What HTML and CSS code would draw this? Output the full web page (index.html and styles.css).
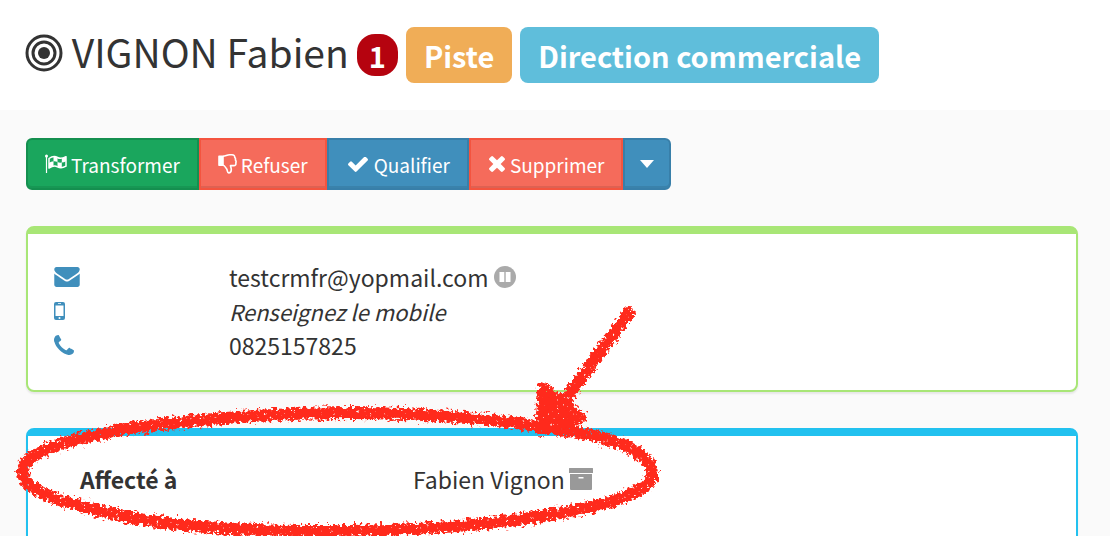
FILE: index.html
```
<!DOCTYPE html>
<html lang="fr">
<head>
    <meta charset="UTF-8">
    <meta name="viewport" content="width=device-width, initial-scale=1.0">
    <title>VIGNON Fabien</title>
    <link rel="stylesheet" href="styles.css">
</head>
<body>
    <header class="page-header">
        <h1>
            <svg class="icon-target" viewBox="0 0 38 38" aria-hidden="true">
                <circle cx="19" cy="19" r="17" fill="none" stroke="currentColor" stroke-width="3"/>
                <circle cx="19" cy="19" r="11" fill="none" stroke="currentColor" stroke-width="3"/>
                <circle cx="19" cy="19" r="6" fill="currentColor"/>
            </svg>
            VIGNON Fabien
        </h1>
        <span class="badge">1</span>
        <span class="label label-warning">Piste</span>
        <span class="label label-info">Direction commerciale</span>
    </header>

    <main class="content">
        <div class="btn-group">
            <button type="button" class="btn btn-success">
                <svg class="icon-flag" viewBox="0 0 22 20" fill="none" stroke="currentColor" aria-hidden="true">
                    <path d="M1.500 2v17" stroke-width="1.200"/>
                    <circle cx="1.500" cy="2" r="1.500" fill="currentColor" stroke="none"/>
                    <path d="M4 4.500C7.500 2 10 2 12.500 3.500s5 1 8.500-.8v9.500c-3.500 2-6 2-8.500.6s-5-1-8.500 1.200z" stroke-width="1.500" stroke-linejoin="round"/>
                    <path d="M8.500 2.700c1.500-.1 2.800.2 4 .8v4.500c-1.200-.6-2.500-.9-4-.8zM12.500 8c1.300.7 2.700.9 4.300.6v4.600c-1.600.3-3 .1-4.300-.4zM4 9c1.500-1 3-1.700 4.500-1.800v4.900C7 12.200 5.500 13 4 14zM16.800 4.100c1.400-.2 2.800-.7 4.200-1.400v4.500c-1.400.7-2.800 1.200-4.200 1.400z" fill="currentColor" stroke="none"/>
                </svg>
                Transformer
            </button>
            <button type="button" class="btn btn-danger">
                <svg class="icon-thumb" viewBox="0 0 19 20" fill="none" stroke="currentColor" stroke-width="1.600" stroke-linejoin="round" aria-hidden="true">
                    <path d="M1 2.300h4v9H1z" fill="currentColor"/>
                    <path d="M5 2.300c2.500 0 4-1.500 6.500-1.500h2.500c2 0 2.800 1 2.700 2.500.9.800 1 1.700.7 2.700.8 1 .9 2 .4 2.900.4 1.700-.5 2.700-2 2.700h-3.300c.2 1.500.9 2.700.8 4.300-.1 2-1.200 3-2.600 3-1.500-.1-1.200-2.600-2-3.900C7.500 13.300 6.500 11.300 5 11.300"/>
                </svg>
                Refuser
            </button>
            <button type="button" class="btn btn-primary">
                <svg class="icon-check" viewBox="-34 370 1860 1152" fill="currentColor" aria-hidden="true">
                    <path d="M1671 566q0 40-28 68l-724 724-136 136q-28 28-68 28t-68-28l-136-136-362-362q-28-28-28-68t28-68l136-136q28-28 68-28t68 28l294 295 656-657q28-28 68-28t68 28l136 136q28 28 28 68z"/>
                </svg>
                Qualifier
            </button>
            <button type="button" class="btn btn-danger">
                <svg class="icon-times" viewBox="228 366 1337 1188" fill="currentColor" aria-hidden="true">
                    <path d="M1490 1322q0 40-28 68l-136 136q-28 28-68 28t-68-28l-294-294-294 294q-28 28-68 28t-68-28l-136-136q-28-28-28-68t28-68l294-294-294-294q-28-28-28-68t28-68l136-136q28-28 68-28t68 28l294 294 294-294q28-28 68-28t68 28l136 136q28 28 28 68t-28 68l-294 294 294 294q28 28 28 68z"/>
                </svg>
                Supprimer
            </button>
            <button type="button" class="btn btn-primary btn-toggle" aria-label="Plus d'actions">
                <span class="caret"></span>
            </button>
        </div>

        <section class="box box-contact">
            <dl class="contact-list">
                <dt>
                    <svg class="icon-mail" viewBox="0 256 1792 1408" fill="currentColor" role="img" aria-label="Email">
                        <path d="M1792 710v794q0 66-47 113t-113 47h-1472q-66 0-113-47t-47-113v-794q44 49 101 87 362 246 497 345 57 42 92.500 65.500t94.500 48 110 24.500h2q51 0 110-24.500t94.500-48 92.500-65.500q170-123 498-345 57-39 100-87zm0-294q0 79-49 151t-122 123q-376 261-468 325-10 7-42.500 31t-54 38.500-52 32.500-57.500 27-50 9h-2q-23 0-50-9t-57.500-27-52-32.500-54-38.500-42.500-31q-91-64-262-182.500t-205-142.500q-62-42-117-115.500t-55-136.500q0-78 41.500-130t118.500-52h1472q65 0 112.500 47t47.500 113z"/>
                    </svg>
                </dt>
                <dd>
                    testcrmfr@yopmail.com
                    <svg class="icon-pause" viewBox="0 0 22 22" aria-hidden="true">
                        <circle cx="11" cy="11" r="11" fill="#aaa"/>
                        <path d="M5.500 6h4.800v10H5.500zM11.700 6h4.800v10h-4.800z" fill="#fff"/>
                    </svg>
                </dd>
                <dt>
                    <svg class="icon-mobile" viewBox="0 0 11 18" role="img" aria-label="Mobile">
                        <path fill="currentColor" fill-rule="evenodd" d="M2 0h7a2 2 0 0 1 2 2v14a2 2 0 0 1-2 2H2a2 2 0 0 1-2-2V2a2 2 0 0 1 2-2zM1.500 3.500v10.500h8V3.500zM4 1.200v.8h3v-.8zM5.500 15a1 1 0 1 0 0 2 1 1 0 0 0 0-2z"/>
                    </svg>
                </dt>
                <dd><em>Renseignez le mobile</em></dd>
                <dt>
                    <svg class="icon-phone" viewBox="192 128 1408 1408" fill="currentColor" role="img" aria-label="Téléphone">
                        <path d="M1600 1240q0 27-10 70.500t-21 68.500q-21 50-122 106-94 51-186 51-27 0-53-3.500t-57.500-12.500-47-14.500-55.500-20.500-49-18q-98-35-175-83-127-79-264-216t-216-264q-48-77-83-175-3-9-18-49t-20.500-55.500-14.500-47-12.500-57.500-3.500-53q0-92 51-186 56-101 106-122 25-11 68.500-21t70.500-10q14 0 21 3 18 6 53 76 11 19 30 54t35 63.500 31 53.500q3 4 17.500 25t21.500 35.500 7 28.500q0 20-28.500 50t-62 55-62 53-28.500 46q0 9 5 22.500t8.500 20.500 14 24 11.500 19q76 137 174 235t235 174q2 1 19 11.500t24 14 20.500 8.500 22.500 5q18 0 46-28.500t53-62 55-62 50-28.500q14 0 28.500 7t35.500 21.500 25 17.500q25 15 53.500 31t63.500 35 54 30q70 35 76 53 3 7 3 21z"/>
                    </svg>
                </dt>
                <dd>0825157825</dd>
            </dl>
        </section>

        <section class="box box-owner">
            <dl class="owner-list">
                <dt>Affecté à</dt>
                <dd>
                    Fabien Vignon
                    <svg class="icon-archive" viewBox="0 0 24 22" fill="#999" aria-hidden="true">
                        <path d="M.5 0h23a.5.500 0 0 1 .5.500V5H0V.5A.5.500 0 0 1 .5 0z"/>
                        <path fill-rule="evenodd" d="M1 6h22V21a1 1 0 0 1-1 1H2a1 1 0 0 1-1-1zM9.500 9v1.600h5V9z"/>
                    </svg>
                </dd>
            </dl>
        </section>
    </main>

    <!-- hand-drawn marks over the assignment row -->
    <svg class="annotation" viewBox="0 290 680 246" aria-hidden="true">
        <filter id="chalk" filterUnits="userSpaceOnUse" x="0" y="290" width="680" height="260" color-interpolation-filters="sRGB">
            <feTurbulence type="fractalNoise" baseFrequency="0.3" numOctaves="3" seed="4" result="noise"/>
            <feColorMatrix in="noise" type="matrix" values="0 0 0 0 0  0 0 0 0 0  0 0 0 0 0  0 0 8 0 -1.300" result="grain"/>
            <feDisplacementMap in="SourceGraphic" in2="noise" scale="11" xChannelSelector="R" yChannelSelector="G" result="rough"/>
            <feComposite in="rough" in2="grain" operator="in"/>
        </filter>
        <g filter="url(#chalk)" fill="none" stroke="#ff2a1c" stroke-width="12" stroke-linecap="round" stroke-linejoin="round">
            <path d="M652 472C648 450 610 436 560 430C500 419 420 413 350 413C270 413 190 420 133 428C75 438 23 450 23 472C23 492 65 504 133 518C190 528 250 531 310 531C400 531 480 528 560 513C610 504 650 492 652 475"/>
            <path d="M629 313L600 352L564 402"/>
            <path d="M543 387L540 431L582 418L562 402Z" fill="#ff2a1c" stroke-width="10"/>
        </g>
    </svg>
</body>
</html>
```

FILE: styles.css
```
* {
    margin: 0;
    padding: 0;
    box-sizing: border-box;
}

body {
    background: #fafafa;
    color: #333;
    font-family: 'Source Sans Pro', 'Noto Sans CJK SC', sans-serif;
    font-size: 23px;
    line-height: 34px;
    min-height: 100vh;
    position: relative;
    overflow: hidden;
}

svg {
    flex: none;
}

/* Header */
.page-header {
    display: flex;
    align-items: baseline;
    gap: 8px;
    height: 110px;
    padding: 23px 25px 0;
    background: #fff;
}

.page-header h1 {
    font-size: 39px;
    font-weight: 400;
    line-height: 56px;
}

.icon-target {
    width: 38px;
    height: 38px;
    vertical-align: -4px;
}

.badge {
    padding: 0 12px;
    border-radius: 18px;
    background: #b5030f;
    color: #fff;
    font-size: 29px;
    font-weight: 700;
    line-height: 42px;
}

.label {
    padding: 0 18px;
    border-radius: 8px;
    color: #fff;
    font-size: 29px;
    font-weight: 700;
    line-height: 56px;
}

.label-warning {
    background: #f0ad57;
}

.label-info {
    background: #5fbedb;
}

/* Toolbar */
.content {
    padding: 28px 32px 0 26px;
}

.btn-group {
    display: flex;
    margin-bottom: 36px;
}

.btn {
    display: flex;
    align-items: center;
    gap: 4px;
    height: 52px;
    padding: 0 17px;
    border: 2px solid;
    box-shadow: inset 0 -2px 0 rgba(0, 0, 0, 0.09);
    color: #fff;
    font-family: inherit;
    font-size: 19px;
    cursor: pointer;
}

.btn:first-child {
    border-radius: 6px 0 0 6px;
}

.btn:last-child {
    border-radius: 0 6px 6px 0;
}

.btn-success {
    background: #1aa65d;
    border-color: #148f4f;
}

.btn-danger {
    background: #f56b5b;
    border-color: #f4543f;
}

.btn-primary {
    background: #408fbc;
    border-color: #387fa9;
}

.btn-toggle {
    padding: 0 15px;
}

.icon-flag {
    width: 22px;
    height: 20px;
}

.icon-thumb {
    width: 19px;
    height: 20px;
}

.icon-check {
    width: 24px;
    height: 15px;
}

.icon-times {
    width: 18px;
    height: 16px;
}

.caret {
    border-top: 8px solid #fff;
    border-left: 7px solid transparent;
    border-right: 7px solid transparent;
}

/* Boxes */
.box {
    margin-bottom: 36px;
    border: 2px solid;
    border-top-width: 8px;
    border-radius: 8px;
    background: #fff;
    box-shadow: 0 2px 2px rgba(0, 0, 0, 0.08);
}

.box-contact {
    padding: 26px;
    padding-bottom: 28px;
    border-color: #a8e676;
}

.box-owner {
    min-height: 160px;
    padding: 26px 52px;
    border-color: #22c1ef;
}

.contact-list {
    display: grid;
    grid-template-columns: 175px 1fr;
}

.contact-list dt,
.contact-list dd,
.owner-list dd {
    display: flex;
    align-items: center;
    height: 34px;
}

.contact-list dt {
    color: #408fbc;
}

.contact-list dd {
    gap: 6px;
}

.contact-list em {
    font-size: 22px;
}

.icon-mail {
    width: 26px;
    height: 20px;
}

.icon-mobile {
    width: 11px;
    height: 18px;
}

.icon-phone {
    width: 20px;
    height: 20px;
}

.icon-pause {
    width: 22px;
    height: 22px;
}

.owner-list {
    display: grid;
    grid-template-columns: 333px 1fr;
}

.owner-list dt {
    font-weight: 700;
}

.owner-list dd {
    gap: 4px;
}

.icon-archive {
    width: 24px;
    height: 22px;
}

/* Annotation drawn on top of the page */
.annotation {
    position: absolute;
    top: 290px;
    left: 0;
    width: 680px;
    pointer-events: none;
}
```
